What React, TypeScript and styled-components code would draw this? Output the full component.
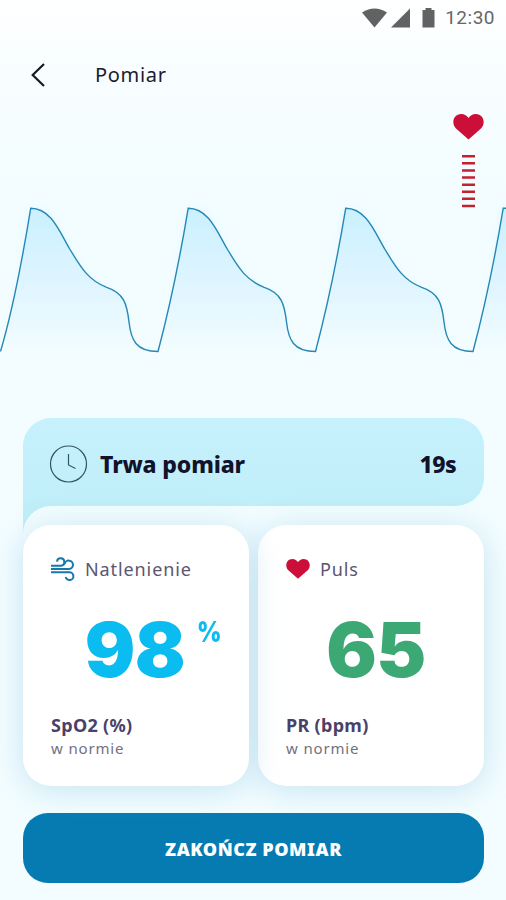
import React from "react";
import styled, { createGlobalStyle } from "styled-components";

const GlobalStyle = createGlobalStyle`
  * { box-sizing: border-box; }
  body { margin: 0; font-family: "Noto Sans", "Open Sans", sans-serif; }
`;

const Screen = styled.main`
  width: 506px;
  height: 900px;
  overflow: hidden;
  display: flex;
  flex-direction: column;
  background: linear-gradient(#ffffff 0, #f8feff 75px, #f3fdff 180px, #f3fdff 100%);
`;

const StatusBar = styled.div`
  height: 36px;
  padding: 0 11px 0 0;
  display: flex;
  justify-content: flex-end;
  align-items: center;
`;

const StatusIcons = styled.svg`
  width: 76px;
  height: 22px;
  margin-right: 7px;
  fill: #606263;
`;

const Clock = styled.time`
  font: 400 19px/36px Roboto, sans-serif;
  letter-spacing: 0.5px;
  color: #656768;
`;

const Header = styled.header`
  height: 76px;
  padding: 1px 30px 0 31px;
  display: flex;
  align-items: center;
`;

const BackButton = styled.button`
  width: 64px;
  height: 40px;
  padding: 0;
  border: 0;
  background: none;
  display: flex;
  align-items: center;
`;

const Title = styled.h1`
  margin: 0;
  font-size: 20px;
  font-weight: 400;
  line-height: 30px;
  letter-spacing: 0.7px;
  color: #1d1b2e;
`;

const Monitor = styled.section`
  height: 306px;
  flex: none;
  display: grid;
`;

const Wave = styled.svg`
  grid-area: 1 / 1;
  width: 506px;
  height: 306px;
`;

const Signal = styled.div`
  grid-area: 1 / 1;
  justify-self: end;
  align-self: start;
  width: 31px;
  margin: 2px 22px 0 0;
  display: flex;
  flex-direction: column;
  align-items: center;
  gap: 15px;
`;

const Results = styled.section`
  width: 461px;
  margin-left: 23px;
  display: flex;
  flex-direction: column;
`;

const Banner = styled.div`
  height: 88px;
  padding: 4px 28px 0 26px;
  border-radius: 28px 28px 28px 0;
  background: linear-gradient(#c6f1fd, #c0eef9);
  display: flex;
  align-items: center;
`;

const BannerLabel = styled.strong`
  margin-left: 12px;
  font-size: 23px;
  font-weight: 800;
  line-height: 32px;
  letter-spacing: -0.15px;
  color: #12132a;
`;

const Remaining = styled(BannerLabel)`
  margin-left: auto;
  letter-spacing: -0.6px;
`;

const CardArea = styled.div`
  height: 280px;
  background: linear-gradient(#c0eef9, #c0eef9) 0 0 / 28px 28px no-repeat;
`;

const Cards = styled.div`
  height: 280px;
  padding-top: 19px;
  border-radius: 28px 28px 0 0;
  background: #f3fdff;
  display: grid;
  grid-template-columns: 226px 226px;
  gap: 9px;
`;

const Card = styled.article`
  height: 261px;
  padding: 28px 28px 0;
  border-radius: 28px;
  background: #fff;
  box-shadow: 0 4px 32px rgba(104, 175, 215, 0.32);
  display: flex;
  flex-direction: column;

  &:first-child {
    position: relative;
    z-index: 1;
  }
`;

const CardHeading = styled.h2`
  margin: 0;
  height: 32px;
  display: flex;
  align-items: center;
  gap: 10px;
  font-size: 18px;
  font-weight: 400;
  letter-spacing: 0.9px;
  color: #5b5670;
`;

const Reading = styled.div<{ $color: string }>`
  height: 90px;
  margin: 20px 0 0 10px;
  display: flex;
  justify-content: center;
  font-family: Inter, sans-serif;
  font-size: 75px;
  font-weight: 900;
  line-height: 90px;
  letter-spacing: -0.5px;
  color: ${(p) => p.$color};
`;

const ReadingUnit = styled.sup`
  width: 0;
  margin-left: 12px;
  font-size: 28px;
  font-weight: 900;
  line-height: 55px;
  letter-spacing: 0;
  transform: scaleX(0.84);
  transform-origin: left;
`;

const Measure = styled.strong`
  margin-top: 17px;
  font-size: 18px;
  font-weight: 700;
  line-height: 26px;
  letter-spacing: 0.3px;
  color: #4a4169;
`;

const Verdict = styled.span`
  font-size: 15px;
  line-height: 20px;
  letter-spacing: 0.85px;
  color: #747080;
`;

const FinishButton = styled.button`
  flex: none;
  width: 461px;
  height: 70px;
  margin: 27px 0 0 23px;
  padding: 2px 0 0;
  border: 0;
  border-radius: 25px;
  background: #057bb2;
  color: #fff;
  font: 900 18px/26px "Noto Sans", sans-serif;
  letter-spacing: 0.55px;
`;

const Heart = ({ width }: { width: number }) => (
  <svg width={width} height={(width * 26) / 31} viewBox="0 0 31 26" fill="#cb0f38">
    <path d="M15.5 25.5 3 14.5C-2 9.5.2 0 8.3 0c3.3 0 5.7 1.8 7.2 4C17 1.800 19.400 0 22.700 0c8.100 0 10.300 9.500 5.300 14.500Z" />
  </svg>
);

const SignalBars = () => (
  <svg width="13" height="53" viewBox="0 0 13 53" stroke="#c4202e" strokeWidth="13">
    <path d="M6.500 0V53" strokeDasharray="2.500 4.600" />
  </svg>
);

const WindIcon = () => (
  <svg width="24" height="26" viewBox="0 0 24 26" fill="none" stroke="#1678ae" strokeWidth="2">
    <path d="M0 9.700H10A3.700 3.700 0 1 0 6 5.600" />
    <path d="M0 13H17.500A4.200 4.200 0 1 0 13.600 8.200" />
    <path d="M0 16.300H18A3.900 3.900 0 1 1 14.700 21" />
  </svg>
);

const BEAT =
  "c21 0 29.300 24.700 39.300 41.200c9 14.500 17 30.500 36.700 37.800c17.300 5.700 20.300 16.700 22.300 34.700c2 18 7 29.500 29 29.500c9-34 19-76 30.200-143.200";
const WAVE = `M.5 351.500C10.500 317.500 19.500 277 30.700 208.300${BEAT.repeat(3)}h10`;

const PulseWave = () => (
  <Wave viewBox="0 112 506 306">
    <defs>
      <linearGradient id="wave-fill" x1="0" y1="208" x2="0" y2="354" gradientUnits="userSpaceOnUse">
        <stop offset="0" stopColor="#caf0ff" />
        <stop offset=".6" stopColor="#e2f6ff" />
        <stop offset="1" stopColor="#f3fdff" />
      </linearGradient>
      <filter id="wave-glow" x="-10%" y="-20%" width="120%" height="140%">
        <feGaussianBlur stdDeviation="6" />
      </filter>
    </defs>
    <path d={`${WAVE}V352H0Z`} fill="url(#wave-fill)" opacity=".45" filter="url(#wave-glow)" />
    <path d={`${WAVE}V352H0Z`} fill="url(#wave-fill)" />
    <path d={WAVE} fill="none" stroke="#2688b5" strokeWidth="1.4" />
  </Wave>
);

export default function App() {
  return (
    <>
      <GlobalStyle />
      <Screen>
        <StatusBar>
          <StatusIcons viewBox="0 0 76 22">
            <path d="M0 5.500Q12.500-2.500 25 5.500L12.500 20.500Z" />
            <path d="M29 20.500H48V1.500Z" />
            <path d="M60.500 3h3V1h6v2h3v17.500h-12Z" />
          </StatusIcons>
          <Clock>12:30</Clock>
        </StatusBar>
        <Header>
          <BackButton aria-label="Wstecz">
            <svg width="15" height="24" viewBox="0 0 15 24" fill="none" stroke="#171923" strokeWidth="2.200">
              <path d="M13 1 1.700 12 13 23" />
            </svg>
          </BackButton>
          <Title>Pomiar</Title>
        </Header>
        <Monitor>
          <PulseWave />
          <Signal>
            <Heart width={31} />
            <SignalBars />
          </Signal>
        </Monitor>
        <Results>
          <Banner>
            <svg width="39" height="39" viewBox="0 0 39 39" fill="none" stroke="#355363" strokeWidth="1.200">
              <circle cx="19.500" cy="19" r="18" />
              <path d="M19.500 9v11l7 3.500" />
            </svg>
            <BannerLabel>Trwa pomiar</BannerLabel>
            <Remaining>19s</Remaining>
          </Banner>
          <CardArea>
            <Cards>
              <Card>
                <CardHeading>
                  <WindIcon />
                  Natlenienie
                </CardHeading>
                <Reading $color="#0bbcf0">
                  98<ReadingUnit>%</ReadingUnit>
                </Reading>
                <Measure>SpO2 (%)</Measure>
                <Verdict>w normie</Verdict>
              </Card>
              <Card>
                <CardHeading>
                  <Heart width={24} />
                  Puls
                </CardHeading>
                <Reading $color="#3ca874">65</Reading>
                <Measure>PR (bpm)</Measure>
                <Verdict>w normie</Verdict>
              </Card>
            </Cards>
          </CardArea>
        </Results>
        <FinishButton>ZAKOŃCZ POMIAR</FinishButton>
      </Screen>
    </>
  );
}
